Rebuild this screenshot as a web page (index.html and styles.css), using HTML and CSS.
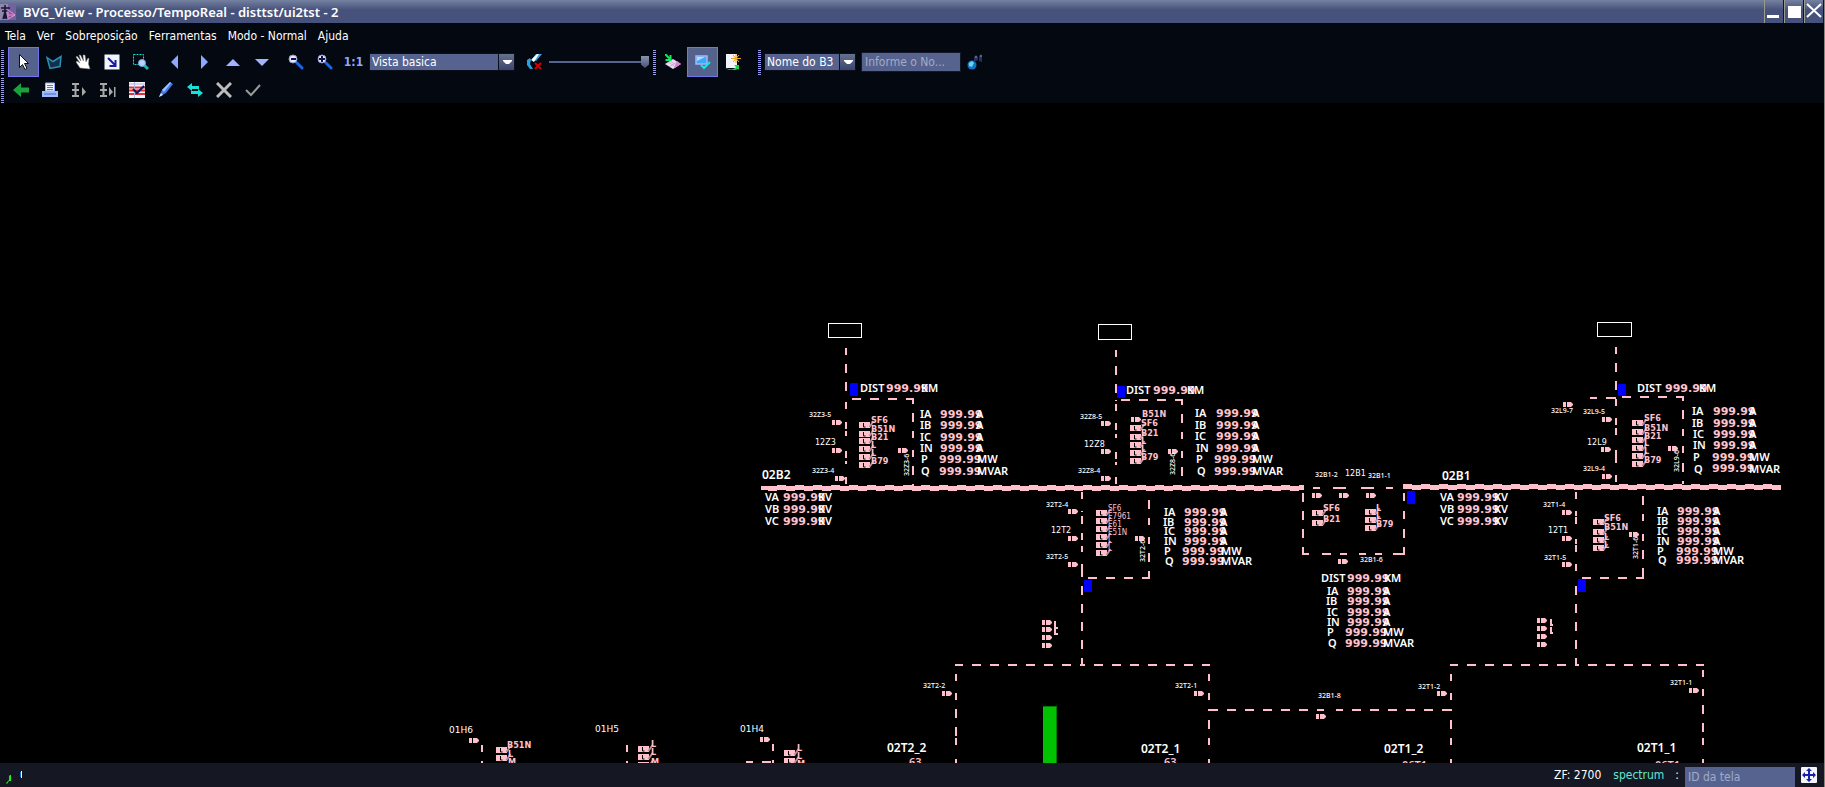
FILE: index.html
```html
<!DOCTYPE html>
<html lang="pt-BR">
<head>
<meta charset="utf-8">
<title>BVG_View - Processo/TempoReal</title>
<link rel="stylesheet" href="styles.css">
</head>
<body>
<div class="window">
<header class="titlebar">
  <svg class="app-icon" width="16" height="16" viewBox="0 0 16 16"><rect width="16" height="16" fill="#72639c"/><path d="M0 0h8v16H0z" fill="#9186ac"/><path d="M5 1v14M1 4h9M2 7h7M3 15l2-7 2 7" stroke="#171432" stroke-width="1.5" fill="none"/><path d="M8 6l7 5-7 4zM8 11h7" stroke="#f08bd8" fill="none"/></svg>
  <h1 class="title">BVG_View - Processo/TempoReal - disttst/ui2tst - 2</h1>
  <div class="win-buttons">
    <button class="win-btn" aria-label="Minimizar"><svg width="18" height="23"><path d="M2 15h12v3H2z" fill="#fff"/></svg></button>
    <button class="win-btn" aria-label="Maximizar"><svg width="18" height="23"><path d="M3 6h13v12H3z" fill="#fff"/></svg></button>
    <button class="win-btn" aria-label="Fechar"><svg width="18" height="23"><path d="M2 4l14 13M16 4L2 17" stroke="#fff" stroke-width="2"/></svg></button>
  </div>
</header>
<nav class="menubar">
  <button>Tela</button><button>Ver</button><button>Sobreposição</button><button>Ferramentas</button><button>Modo - Normal</button><button>Ajuda</button>
</nav>
<div class="toolbar">
  <span class="grip"></span>
  <div class="group">
    <button class="tool active" aria-label="Selecionar"><svg width="16" height="16"><path d="M3.500.5v13l3-3 2.500 5 2-1-2.500-5h4z" fill="#fff" stroke="#111"/></svg></button>
    <button class="tool" aria-label="Área"><svg width="16" height="16"><path d="M1 3.500l6 4 8-5-1 10-10 2z" fill="#12304a" stroke="#2d8fb3" stroke-width="1.500"/></svg></button>
    <button class="tool" aria-label="Mover"><svg width="16" height="16"><path d="M5 14L1 8l1-1 3 2L1 3l1-1 4 5-2-6h1.500l3 6-.5-6H10l1 7 2-4 1 .5-.5 5.500L15 15z" fill="#fff" stroke="#777" stroke-width=".5"/></svg></button>
    <button class="tool" aria-label="Ajustar"><svg width="16" height="16"><path d="M.5.5h15v15H.5z" fill="#f1f5ff"/><path d="M4 4l7 7M11.500 6v6h-6" stroke="#1a1aa8" stroke-width="2" fill="none"/></svg></button>
    <button class="tool" aria-label="Zoom de janela"><svg width="16" height="16"><path d="M.5.5h10v10H.5z" fill="none" stroke="#12e0c8" stroke-dasharray="2 1"/><path d="M11 11l4 4" stroke="#19b9b0" stroke-width="3"/><circle cx="9" cy="9" r="3.500" fill="#b9d3ff" stroke="#6ea0e0"/></svg></button>
  </div>
  <div class="group">
    <button class="tool" aria-label="Esquerda"><svg width="16" height="16"><path d="M11 1v14L4 8z" fill="#8fa8ff"/></svg></button>
    <button class="tool" aria-label="Direita"><svg width="16" height="16"><path d="M5 1v14l7-7z" fill="#8fa8ff"/></svg></button>
    <button class="tool" aria-label="Acima"><svg width="16" height="16"><path d="M1 12h14L8 5z" fill="#a3b4ff"/></svg></button>
    <button class="tool" aria-label="Abaixo"><svg width="16" height="16"><path d="M1 5h14l-7 7z" fill="#a3b4ff"/></svg></button>
  </div>
  <div class="group">
    <button class="tool" aria-label="Reduzir"><svg width="16" height="16"><path d="M9 9l5 5" stroke="#1668e8" stroke-width="3" stroke-linecap="round"/><path d="M8 10l5 5" stroke="#0d2f9c" stroke-width="1"/><circle cx="5" cy="5" r="4" fill="#e6eaff" stroke="#8d97c8"/><path d="M3 5h5" stroke="#101050" stroke-width="2"/></svg></button>
    <button class="tool" aria-label="Ampliar"><svg width="16" height="16"><path d="M9 9l5 5" stroke="#1668e8" stroke-width="3" stroke-linecap="round"/><path d="M8 10l5 5" stroke="#0d2f9c" stroke-width="1"/><circle cx="5" cy="5" r="4" fill="#e6eaff" stroke="#8d97c8"/><path d="M2 5h6M5 2v6" stroke="#101050" stroke-width="2"/></svg></button>
    <button class="tool ratio">1:1</button>
  </div>
  <div class="combo view-combo"><select aria-label="Vista"><option>Vista basica</option></select><svg class="combo-arrow" width="16" height="16"><path d="M4 6h9v1l-3 3H7L4 7z" fill="#fff"/></svg></div>
  <button class="tool eraser" aria-label="Limpar destaque"><svg width="16" height="16"><path d="M6 5l4-5h6l-6 7z" fill="#35a5ea"/><path d="M5 6l6-6h2L8 8z" fill="#fff"/><path d="M4 4L1 6v5l3 4h3l-3-5 1-4z" fill="#2c9fe0"/><path d="M9 9l6 6M15 9l-6 6" stroke="#d80000" stroke-width="2"/></svg></button>
  <input class="slider" type="range" value="100" aria-label="Intensidade">
  <span class="grip"></span>
  <div class="group plain">
    <button class="tool" aria-label="Inserir camada"><svg width="16" height="16"><path d="M8 5l8 5-8 5-8-5z" fill="#eedcf6"/><path d="M8 15l8-5-4-3-2 5z" fill="#e77be0"/><path d="M3 8l8 5M5 7l8 5M4 13l8-5" stroke="#a48bb8" stroke-width=".5"/><path d="M0 0l5 5M5.500 1v5h-5" stroke="#10e860" stroke-width="2" fill="none"/></svg></button>
    <button class="tool active" aria-label="Confirmar tela"><svg width="16" height="16"><path d="M1 2h11v8H1z" fill="#3fa7f5" stroke="#a8b4ff" stroke-width="1.500"/><path d="M2 7V3h8z" fill="#a9e2ff"/><path d="M6 11l3 3 6-6" stroke="#18e8e0" stroke-width="2" fill="none"/></svg></button>
    <button class="tool" aria-label="Nova tela"><svg width="16" height="16"><path d="M1 0h11v14H1z" fill="#f2f2fa"/><path d="M0 14c5 2 9 2 11-1l-2-2h5v5l-1-1c-4 2-8 2-13-1z" fill="#1bd44a"/><path d="M11 0v9M6 4.500h10M8 1l6 7M14 1L8 8" stroke="#f2a91c"/></svg></button>
  </div>
  <span class="grip far"></span>
  <div class="combo name-combo"><select aria-label="Tipo de nome"><option>Nome do B3</option></select><svg class="combo-arrow" width="16" height="16"><path d="M4 6h9v1l-3 3H7L4 7z" fill="#fff"/></svg></div>
  <input class="field name-field" type="text" placeholder="Informe o No..." aria-label="Informe o nome">
  <button class="tool find" aria-label="Localizar"><svg width="16" height="16"><circle cx="5" cy="11" r="4.500" fill="#1672c4"/><path d="M2 9l3-2 2 2-2 4-3-1z" fill="#65d6e8"/><path d="M7 8V3l2-2 2 2v3zM12 7V2l2-2 1 2v6z" fill="#27315f"/><path d="M9 2v2M14 1v2" stroke="#8395cf"/></svg></button>
</div>
<div class="toolbar second">
  <span class="grip"></span>
  <div class="group plain">
    <button class="tool" aria-label="Voltar"><svg width="16" height="16"><path d="M0 8l8-7v4.500h8v5H8V15z" fill="#19a23c"/></svg></button>
    <button class="tool" aria-label="Imprimir"><svg width="16" height="16"><path d="M3.500 1h9v8h-9z" fill="#f3f6ff" stroke="#8fb0ff"/><path d="M5 3.500h6M5 5.500h6M5 7.500h6" stroke="#5574dc"/><path d="M0 9h16v6H0z" fill="#9dbaff"/><path d="M2 12h12" stroke="#4c66c8"/></svg></button>
    <button class="tool" aria-label="Avançar passo"><svg width="16" height="16"><path d="M1 2h7M4.500 2v12M1 8h7M1 14h7" stroke="#a8a8a8" stroke-width="2"/><path d="M11 5v9l4-4z" fill="#a8a8a8"/></svg></button>
    <button class="tool" aria-label="Avançar ao fim"><svg width="16" height="16"><path d="M0 2h7M3.500 2v12M0 8h7M0 14h7" stroke="#a8a8a8" stroke-width="2"/><path d="M9 5v9l4-4zM14 5h1.500v10H14z" fill="#a8a8a8"/></svg></button>
    <button class="tool" aria-label="Reconhecer lista"><svg width="16" height="16"><path d="M0 0h16v16H0z" fill="#f4f4fb"/><path d="M0 5.500h16M0 8.500h16M0 12h16" stroke="#e03038" stroke-width="2"/><path d="M0 2h16M5.500 0v16" stroke="#a9b2e5"/><path d="M4 7l4 4 7-7" stroke="#15155a" stroke-width="2" fill="none"/></svg></button>
    <button class="tool" aria-label="Editar"><svg width="16" height="16"><path d="M1 15l3-7 8-8 3 2-7 9z" fill="#3f77ec"/><path d="M4 8l8-8 1 1-7 9z" fill="#9cc0ff"/><path d="M1 15l2-4 2 2z" fill="#dfe4f8"/></svg></button>
    <button class="tool" aria-label="Alternar"><svg width="16" height="16"><path d="M0 5l5-4v3h7v3H5v2zM16 11l-5 4v-3H4V9h7V7z" fill="#14e3da"/></svg></button>
    <button class="tool" aria-label="Cancelar"><svg width="16" height="16"><path d="M1 1l14 14M15 1L1 15" stroke="#bcbcbc" stroke-width="3"/></svg></button>
    <button class="tool" aria-label="Aceitar"><svg width="16" height="16"><path d="M1 8l5 5 9-10" stroke="#9b9b9b" stroke-width="2" fill="none"/></svg></button>
  </div>
</div>
<main class="canvas">
<svg class="diagram" width="100%" height="100%">
<defs>
  <g id="sw"><path d="M0 0h3v5H0zM4 0h4l2 2v1L8 5H4z" fill="pink"/></g>
  <g id="relay"><path d="M0 0h11v6H0z" fill="pink"/><path d="M4.500 1v4h2" stroke="#000" fill="none"/><path d="M10.500 5l4-6" stroke="#b98a92" stroke-width="2"/></g>
</defs>
<g transform="translate(0 -103)">

<g class="bus">
  <path d="M761 488H1304M1403 487H1781"/>
  <path class="bus-top" d="M777 486H1304M1403 485H1781"/>
  <path class="bus-bottom" d="M768 490H1304M1412 489H1781"/>
</g>

<g class="feeders">
  <path d="M846 348v7m0 9v9m0 9v9m0 11v7m0 13v7m0 2v5m0 15v7m0 3v3m0 13v7"/>
  <path d="M852 399h9m9 0h9m9 0h9m9 0h8M913 400v4m0 9v9m0 9v7m0 12v7m0 9v9m0 9v3"/>
  <path d="M1116 350v7m0 9v9m0 9v9m0 7v1m0 3v7m0 12v7m0 4v4m0 14v7m0 3v3m0 12v7"/>
  <path d="M1121 400h9m9 0h9m9 0h9m9 0h8M1182 401v4m0 9v9m0 9v7m0 12v7m0 9v9"/>
  <path d="M1082 492v7m0 12v1m0 4v8m0 9v7m0 6v6m0 12v13m0 9v9m0 9v9m0 9v9m0 9v9m0 9v8"/>
  <path d="M1149 490v1m0 9v9m0 9v7m0 12v7m0 9v9m0 9v8M1088 578h9m9 0h9m9 0h9m9 0h8"/>
  <path d="M1616 347v7m0 9v9m0 9v9m0 9v7m0 12v7m0 3v7m0 15v13m0 12v7"/>
  <path d="M1590 398h7m9 0h10M1622 397h9m9 0h9m9 0h9m9 0h8M1683 397v4m0 9v9m0 10v7m0 10v7m0 10v9m0 9v3"/>
  <path d="M1576 492v7m0 12v5m0 1v7m0 15v5m0 1v7m0 12v7m0 15v9m0 9v9m0 9v9m0 9v9m0 9v8"/>
  <path d="M1643 496v9m0 9v7m0 13v7m0 9v9m0 9v10M1582 578h9m9 0h9m9 0h9m9 0h8"/>
  <path d="M1303 493v9m0 9v9m0 9v9m0 9v8M1404 493v8m0 10v8m0 10v9m0 9v8M1304 554h5m13 0h9m9 0h7m12 0h7m9 0h7m11 0h10M1313 488h7m13 0h13m15 0h13m12 0h7"/>
  <path d="M955 665h8m9 0h9m9 0h9m9 0h9m9 0h9m9 0h9m9 0h9m9 0h5m9 0h9m9 0h9m9 0h9m9 0h9m9 0h9m9 0h9m9 0h8"/>
  <path d="M956 674v7m0 12v7m0 9v9m0 9v9m0 2v7m0 14v4M1209 674v7m0 12v7m0 20v9m0 9v7m0 14v4"/>
  <path d="M1208 710h10m9 0h9m9 0h9m9 0h9m9 0h9m9 0h9m9 0h7m12 0h7m9 0h9m9 0h9m9 0h9m9 0h9m9 0h9m9 0h10"/>
  <path d="M1451 674v7m0 12v7m0 20v9m0 9v7m0 14v4M1703 670v7m0 12v7m0 9v9m0 9v9m0 6v7m0 14v4"/>
  <path d="M1450 665h8m9 0h9m9 0h9m9 0h9m9 0h9m9 0h9m9 0h9m9 0h4m9 0h9m9 0h9m9 0h9m9 0h9m9 0h9m9 0h9m9 0h8"/>
  <path d="M482 745v7m0 9v2M627 745v7m0 9v2M773 744v7m0 9v3M746 762h7m9 0h9"/>
  <path d="M1055 621v14m0-7h3m-3 6h3M1551 619v7m0-1h2M1551 627v7m0-1h2"/>
</g>

<g class="terminals"><rect x="828.500" y="323.500" width="33" height="14"/><rect x="1098.500" y="324.500" width="33" height="15"/><rect x="1597.500" y="322.500" width="34" height="14"/></g>
<g fill="#00f">
  <rect x="850" y="383" width="8" height="13" rx="1"/><rect x="1117" y="386" width="8" height="12" rx="1"/><rect x="1618" y="384" width="8" height="12" rx="1"/>
  <rect x="1084" y="580" width="8" height="12" rx="1"/><rect x="1578" y="579" width="8" height="13" rx="1"/><rect x="1407" y="491" width="8" height="13" rx="1"/>
</g>
<path d="M1043 706h14v57h-14z" fill="#007c00"/><path d="M1043 707h13v56h-13z" fill="#00c200"/>

<g class="switches">
  <use href="#sw" x="832" y="420"/><use href="#sw" x="832" y="448"/><use href="#sw" x="835" y="476"/><use href="#sw" x="898" y="448"/>
  <use href="#sw" x="1101" y="421"/><use href="#sw" x="1101" y="449"/><use href="#sw" x="1101" y="476"/><use href="#sw" x="1168" y="449"/><use href="#sw" x="1131" y="417"/>
  <use href="#sw" x="1068" y="509"/><use href="#sw" x="1068" y="536"/><use href="#sw" x="1068" y="562"/><use href="#sw" x="1135" y="536"/>
  <use href="#sw" x="1563" y="402"/><use href="#sw" x="1602" y="417"/><use href="#sw" x="1601" y="447"/><use href="#sw" x="1602" y="474"/><use href="#sw" x="1668" y="446"/>
  <use href="#sw" x="1562" y="510"/><use href="#sw" x="1562" y="536"/><use href="#sw" x="1562" y="562"/><use href="#sw" x="1629" y="532"/>
  <use href="#sw" x="1312" y="493"/><use href="#sw" x="1339" y="493"/><use href="#sw" x="1366" y="493"/><use href="#sw" x="1338" y="559"/>
  <use href="#sw" x="1042" y="620"/><use href="#sw" x="1042" y="627"/><use href="#sw" x="1042" y="635"/><use href="#sw" x="1042" y="643"/>
  <use href="#sw" x="1537" y="618"/><use href="#sw" x="1537" y="626"/><use href="#sw" x="1537" y="634"/><use href="#sw" x="1537" y="642"/>
  <use href="#sw" x="942" y="691"/><use href="#sw" x="1194" y="691"/><use href="#sw" x="1316" y="714"/><use href="#sw" x="1437" y="691"/><use href="#sw" x="1689" y="688"/>
  <use href="#sw" x="469" y="738"/><use href="#sw" x="760" y="737"/>
</g>
<g class="relays">
  <use href="#relay" x="859" y="422"/><use href="#relay" x="859" y="431"/><use href="#relay" x="859" y="438"/><use href="#relay" x="859" y="446"/><use href="#relay" x="859" y="454"/><use href="#relay" x="859" y="462"/>
  <use href="#relay" x="1130" y="425"/><use href="#relay" x="1130" y="434"/><use href="#relay" x="1130" y="442"/><use href="#relay" x="1130" y="450"/><use href="#relay" x="1130" y="458"/>
  <use href="#relay" x="1096" y="510"/><use href="#relay" x="1096" y="518"/><use href="#relay" x="1096" y="526"/><use href="#relay" x="1096" y="534"/><use href="#relay" x="1096" y="542"/><use href="#relay" x="1096" y="550"/>
  <use href="#relay" x="1632" y="420"/><use href="#relay" x="1632" y="429"/><use href="#relay" x="1632" y="437"/><use href="#relay" x="1632" y="445"/><use href="#relay" x="1632" y="453"/><use href="#relay" x="1632" y="461"/>
  <use href="#relay" x="1593" y="519"/><use href="#relay" x="1593" y="529"/><use href="#relay" x="1593" y="537"/><use href="#relay" x="1593" y="545"/>
  <use href="#relay" x="1312" y="510"/><use href="#relay" x="1312" y="520"/><use href="#relay" x="1365" y="509"/><use href="#relay" x="1365" y="517"/><use href="#relay" x="1365" y="525"/>
  <use href="#relay" x="496" y="747"/><use href="#relay" x="496" y="755"/><use href="#relay" x="638" y="746"/><use href="#relay" x="638" y="754"/><use href="#relay" x="638" y="762"/><use href="#relay" x="784" y="750"/><use href="#relay" x="784" y="758"/>
</g>

<g class="relay-name">
  <text x="871" y="423">SF6</text><text x="871" y="432">B51N</text><text x="871" y="440">B21</text><text x="871" y="448">L</text><text x="871" y="456">L</text><text x="871" y="464">B79</text>
  <text x="1142" y="417">B51N</text><text x="1141" y="426">SF6</text><text x="1141" y="436">B21</text><text x="1141" y="444">L</text><text x="1141" y="452">L</text><text x="1141" y="460">B79</text>
  <text x="1644" y="421">SF6</text><text x="1644" y="431">B51N</text><text x="1644" y="439">B21</text><text x="1644" y="446">L</text><text x="1644" y="454">L</text><text x="1644" y="463">B79</text>
  <text x="1604" y="521">SF6</text><text x="1604" y="530">B51N</text><text x="1604" y="540">L</text><text x="1604" y="548">L</text>
  <text x="1323" y="511">SF6</text><text x="1323" y="522">B21</text><text x="1376" y="511">L</text><text x="1376" y="519">L</text><text x="1376" y="527">B79</text>
  <text x="507" y="748">B51N</text><text x="508" y="757">L</text><text x="508" y="765">M</text><text x="651" y="747">L</text><text x="651" y="755">L</text><text x="651" y="765">M</text><text x="797" y="751">L</text><text x="797" y="759">L</text><text x="797" y="767">M</text>
</g>
<g class="relay-name light">
  <text x="1108" y="511">SF6</text><text x="1108" y="519">E7961</text><text x="1108" y="527">E61</text><text x="1108" y="535">E51N</text><text x="1108" y="543">L</text><text x="1108" y="551">L</text>
</g>
<g class="cut-name"><text x="909" y="766">63</text><text x="1164" y="766">63</text><text x="1402" y="769">06T1</text><text x="1655" y="769">06T1</text></g>

<g class="tag">
  <text x="809" y="417">32Z3-5</text><text x="812" y="473">32Z3-4</text><text x="1080" y="419">32Z8-5</text><text x="1078" y="473">32Z8-4</text>
  <text x="1046" y="507">32T2-4</text><text x="1046" y="559">32T2-5</text><text x="1551" y="413">32L9-7</text><text x="1583" y="414">32L9-5</text><text x="1583" y="471">32L9-4</text>
  <text x="1543" y="507">32T1-4</text><text x="1544" y="560">32T1-5</text><text x="1315" y="477">32B1-2</text><text x="1368" y="478">32B1-1</text><text x="1360" y="562">32B1-6</text>
  <text x="923" y="688">32T2-2</text><text x="1175" y="688">32T2-1</text><text x="1318" y="698">32B1-8</text><text x="1418" y="689">32T1-2</text><text x="1670" y="685">32T1-1</text>
  <text transform="translate(909 476) rotate(-90)">32Z3-6</text><text transform="translate(1175 475) rotate(-90)">32Z8-6</text><text transform="translate(1145 562) rotate(-90)">32T2-6</text><text transform="translate(1679 472) rotate(-90)">32L9-6</text><text transform="translate(1638 559) rotate(-90)">32T1-6</text>
</g>
<g class="breaker"><text x="815" y="445">12Z3</text><text x="1084" y="447">12Z8</text><text x="1051" y="533">12T2</text><text x="1587" y="445">12L9</text><text x="1548" y="533">12T1</text><text x="1345" y="476">12B1</text></g>
<g class="bay"><text x="449" y="733">01H6</text><text x="595" y="732">01H5</text><text x="740" y="732">01H4</text></g>
<g class="bus-name"><text x="762" y="479">02B2</text><text x="1442" y="480">02B1</text><text x="887" y="752">02T2_2</text><text x="1141" y="753">02T2_1</text><text x="1384" y="753">02T1_2</text><text x="1637" y="752">02T1_1</text></g>

<g class="value">
  <text x="886" y="392">999.99</text><text x="1153" y="394">999.99</text><text x="1665" y="392">999.99</text><text x="1347" y="582">999.99</text>
  <text x="783" y="501">999.99</text><text x="783" y="513">999.99</text><text x="783" y="525">999.99</text>
  <text x="1457" y="501">999.99</text><text x="1457" y="513">999.99</text><text x="1457" y="525">999.99</text>
  <text x="940" y="418">999.99</text><text x="940" y="429">999.99</text><text x="940" y="441">999.99</text><text x="940" y="452">999.99</text><text x="939" y="463">999.99</text><text x="939" y="475">999.99</text>
  <text x="1216" y="417">999.99</text><text x="1216" y="429">999.99</text><text x="1216" y="440">999.99</text><text x="1216" y="452">999.99</text><text x="1214" y="463">999.99</text><text x="1214" y="475">999.99</text>
  <text x="1184" y="516">999.99</text><text x="1184" y="526">999.99</text><text x="1184" y="535">999.99</text><text x="1184" y="545">999.99</text><text x="1182" y="555">999.99</text><text x="1182" y="565">999.99</text>
  <text x="1713" y="415">999.99</text><text x="1713" y="427">999.99</text><text x="1713" y="438">999.99</text><text x="1713" y="449">999.99</text><text x="1712" y="461">999.99</text><text x="1712" y="472">999.99</text>
  <text x="1677" y="515">999.99</text><text x="1677" y="525">999.99</text><text x="1677" y="535">999.99</text><text x="1677" y="545">999.99</text><text x="1676" y="555">999.99</text><text x="1676" y="564">999.99</text>
  <text x="1347" y="595">999.99</text><text x="1347" y="605">999.99</text><text x="1347" y="616">999.99</text><text x="1347" y="626">999.99</text><text x="1345" y="636">999.99</text><text x="1345" y="647">999.99</text>
</g>
<g class="label">
  <text x="860" y="392">DIST</text><text x="921" y="392">KM</text><text x="1126" y="394">DIST</text><text x="1187" y="394">KM</text><text x="1637" y="392">DIST</text><text x="1699" y="392">KM</text><text x="1321" y="582">DIST</text><text x="1384" y="582">KM</text>
  <text x="765" y="501">VA</text><text x="765" y="513">VB</text><text x="765" y="525">VC</text><text x="818" y="501">KV</text><text x="818" y="513">KV</text><text x="818" y="525">KV</text>
  <text x="1440" y="501">VA</text><text x="1440" y="513">VB</text><text x="1440" y="525">VC</text><text x="1494" y="501">KV</text><text x="1494" y="513">KV</text><text x="1494" y="525">KV</text>
  <text x="920" y="418">IA</text><text x="920" y="429">IB</text><text x="920" y="441">IC</text><text x="920" y="452">IN</text><text x="921" y="463">P</text><text x="921" y="475">Q</text>
  <text x="976" y="418">A</text><text x="976" y="429">A</text><text x="976" y="441">A</text><text x="976" y="452">A</text><text x="977" y="463">MW</text><text x="977" y="475">MVAR</text>
  <text x="1195" y="417">IA</text><text x="1195" y="429">IB</text><text x="1195" y="440">IC</text><text x="1196" y="452">IN</text><text x="1196" y="463">P</text><text x="1197" y="475">Q</text>
  <text x="1252" y="417">A</text><text x="1252" y="429">A</text><text x="1252" y="440">A</text><text x="1252" y="452">A</text><text x="1252" y="463">MW</text><text x="1252" y="475">MVAR</text>
  <text x="1164" y="516">IA</text><text x="1163" y="526">IB</text><text x="1164" y="535">IC</text><text x="1164" y="545">IN</text><text x="1164" y="555">P</text><text x="1165" y="565">Q</text>
  <text x="1220" y="516">A</text><text x="1220" y="526">A</text><text x="1220" y="535">A</text><text x="1220" y="545">A</text><text x="1221" y="555">MW</text><text x="1221" y="565">MVAR</text>
  <text x="1692" y="415">IA</text><text x="1692" y="427">IB</text><text x="1693" y="438">IC</text><text x="1693" y="449">IN</text><text x="1693" y="461">P</text><text x="1694" y="473">Q</text>
  <text x="1749" y="415">A</text><text x="1749" y="427">A</text><text x="1749" y="438">A</text><text x="1749" y="449">A</text><text x="1749" y="461">MW</text><text x="1749" y="473">MVAR</text>
  <text x="1657" y="515">IA</text><text x="1657" y="525">IB</text><text x="1657" y="535">IC</text><text x="1657" y="545">IN</text><text x="1657" y="555">P</text><text x="1658" y="564">Q</text>
  <text x="1713" y="515">A</text><text x="1713" y="525">A</text><text x="1713" y="535">A</text><text x="1713" y="545">A</text><text x="1713" y="555">MW</text><text x="1713" y="564">MVAR</text>
  <text x="1327" y="595">IA</text><text x="1326" y="605">IB</text><text x="1327" y="616">IC</text><text x="1327" y="626">IN</text><text x="1327" y="636">P</text><text x="1328" y="647">Q</text>
  <text x="1383" y="595">A</text><text x="1383" y="605">A</text><text x="1383" y="616">A</text><text x="1383" y="626">A</text><text x="1383" y="636">MW</text><text x="1383" y="647">MVAR</text>
</g>
</g>
</svg>
</main>
<footer class="statusbar">
  <svg class="activity" width="24" height="24"><path d="M0 20l3-3v-4l1-1h1v6H3l-2 3z" fill="#1ef01e"/><path d="M14.500 9v5" stroke="#1d6ed0"/><path d="M15.500 8v7" stroke="#fff"/></svg>
  <span class="zoom-factor">ZF: 2700</span>
  <span class="source">spectrum</span>
  <label class="colon" for="screen-id">:</label>
  <input class="field id-field" id="screen-id" type="text" placeholder="ID da tela">
  <button class="pan" aria-label="Navegar"><svg width="16" height="16"><rect width="16" height="16" rx="1" fill="#f4f5fc"/><path d="M8 2v12M2 8h12" stroke="#1620a8" stroke-width="2"/><path d="M8 1l3 3H5zM8 15l3-3H5zM1 8l3-3v6zM15 8l-3-3v6z" fill="#1620a8"/></svg></button>
</footer>
</div>
</body>
</html>
```

FILE: styles.css
```css
* { box-sizing: border-box; }
html, body { height: 100%; }
body { margin: 0; background: #000; color: #fff; font: 12px/16px "DejaVu Sans Condensed", "Noto Sans", sans-serif; }
button, input, select { font: inherit; color: inherit; margin: 0; padding: 0; border: 0; background: none; border-radius: 0; outline: 0; }
svg { display: block; flex: none; }

.window { display: flex; flex-direction: column; height: 100vh; overflow: hidden; border-right: 1px solid #85857f; background: #040811; }

.titlebar { display: flex; align-items: stretch; height: 23px; flex: none; background: linear-gradient(#75819f, #46527b 10px, #46527b); }
.app-icon { margin-top: 4px; }
.title { flex: 1; margin: 0 0 0 7px; font: 600 13px/25px "Noto Sans", sans-serif; white-space: nowrap; }
.win-buttons { display: flex; }
.win-btn { width: 20px; border-left: 1px solid #9a9a8c; border-right: 1px solid #101528; }

.menubar { display: flex; gap: 11px; height: 23px; flex: none; padding: 2px 5px 0; align-items: center; }

.toolbar { display: flex; align-items: center; height: 32px; flex: none; padding-left: 1px; }
.toolbar.second { height: 25px; align-items: flex-start; }
.grip { width: 3px; height: 25px; flex: none; background: repeating-linear-gradient(#9a9cf0 0 1px, transparent 1px 2px); }
.group { display: flex; align-items: center; margin-left: 4px; }
.group + .group { margin-left: 5px; }
.group.plain { margin-left: 2px; }
.tool { display: flex; width: 29px; height: 30px; flex: none; align-items: center; justify-content: center; }
.tool.active { width: 31px; border: 1px solid #7474ea; background: #55628c; }
.second .tool { height: 24px; }
.ratio { color: #8fa8f8; font-weight: bold; }
.combo { position: relative; flex: none; height: 18px; border: 1px solid #0d101c; background: #56638f; }
.combo select { width: 100%; height: 16px; padding-left: 2px; appearance: none; line-height: 16px; }
.combo-arrow { position: absolute; right: 0; top: 0; pointer-events: none; background: linear-gradient(#66718f, #39456c); border-left: 1px solid #0d101c; }
.view-combo { width: 146px; margin-left: 1px; }
.name-combo { width: 92px; margin-left: 3px; }
.eraser { margin-left: 4px; }
.slider { width: 100px; height: 16px; margin-left: 1px; appearance: none; }
.slider::-webkit-slider-runnable-track { height: 2px; background: #56638f; }
.slider::-webkit-slider-thumb { appearance: none; width: 8px; height: 12px; margin-top: -5px; background: linear-gradient(#8a92a8, #45527a); clip-path: polygon(0 0, 100% 0, 100% 70%, 50% 100%, 0 70%); }
.slider + .grip { margin-left: 4px; }
.grip.far { margin-left: 11px; }
.field { border: 1px solid #14182a; background: #56638f; }
.field::placeholder { color: #a3abc8; opacity: 1; }
.name-field { width: 100px; height: 20px; margin-left: 5px; padding: 0 3px; }
.find { width: 28px; }

.canvas { flex: 1; min-height: 0; overflow: hidden; background: #000; }
.diagram text { white-space: pre; }
.feeders { fill: none; stroke: pink; stroke-width: 2; }
.bus { fill: none; stroke: pink; stroke-width: 4; }
.bus-top, .bus-bottom { stroke-width: 2; stroke-dasharray: 9 9; }
.terminals { fill: none; stroke: #fff; }
.value { fill: pink; font: bold 11px "DejaVu Sans", sans-serif; }
.label { fill: #fff; font: 600 11px "Noto Sans", sans-serif; }
.relay-name { fill: pink; font: bold 9px "DejaVu Sans Condensed", sans-serif; }
.relay-name.light { font-weight: normal; font-size: 8px; }
.cut-name { fill: pink; font: 600 11px "Noto Sans", sans-serif; }
.tag { fill: #fff; font: 500 7px "Noto Sans", sans-serif; }
.breaker { fill: #fff; font: 8px "DejaVu Sans", sans-serif; }
.bay { fill: #fff; font: 9px "DejaVu Sans", sans-serif; }
.bus-name { fill: #fff; font: 600 12px "Noto Sans", sans-serif; }

.statusbar { display: flex; height: 24px; flex: none; align-items: center; padding: 0 7px 0 6px; background: #151722; }
.activity { margin-right: auto; }
.zoom-factor { margin-right: 12px; }
.source { margin-right: 11px; color: #62e6cf; }
.colon { margin-right: 6px; }
.id-field { width: 110px; height: 20px; margin-top: 4px; padding: 0 3px; border: 0; }
.pan { margin-left: 6px; }
```
